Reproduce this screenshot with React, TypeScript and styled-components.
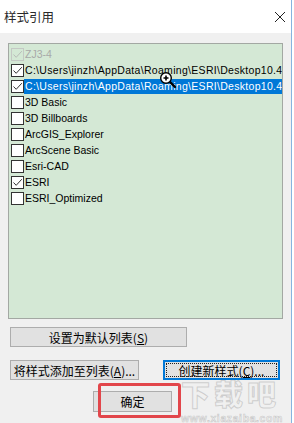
import React from "react";
import styled, { createGlobalStyle } from "styled-components";

const GlobalStyle = createGlobalStyle`
  html, body {
    margin: 0;
    padding: 0;
    background: #ffffff;
  }
  * {
    box-sizing: border-box;
  }
`;

const Window = styled.div`
  position: relative;
  width: 292px;
  height: 423px;
  display: flex;
  flex-direction: column;
  border-right: 1px solid #86b4e0;
  overflow: hidden;
  font-family: "Liberation Sans", "Noto Sans CJK SC", sans-serif;
`;

const TitleBar = styled.div`
  height: 33px;
  flex-shrink: 0;
  display: flex;
  align-items: center;
  justify-content: space-between;
  padding: 0 5px 0 4px;
  background: #ffffff;
`;

const Title = styled.span`
  font-family: "Noto Sans CJK SC", sans-serif;
  font-size: 12.5px;
  color: #2a2a2a;
`;

const Body = styled.div`
  flex: 1;
  background: #f0f0f0;
  padding: 10px 0 0 8px;
  display: flex;
  flex-direction: column;
`;

const ListBox = styled.div`
  width: 275px;
  height: 276px;
  border: 1px solid #a3a8a3;
  background: #d4e8d5;
  padding: 2px 0 0 2px;
  overflow: hidden;
`;

const Row = styled.div`
  display: flex;
  align-items: center;
  height: 16px;
  white-space: nowrap;
`;

const Box = styled.span<{ $disabled?: boolean }>`
  width: 13px;
  height: 13px;
  flex-shrink: 0;
  border: 1px solid ${(p) => (p.$disabled ? "#c4c8c4" : "#333333")};
  background: ${(p) => (p.$disabled ? "transparent" : "#ffffff")};
  display: flex;
  align-items: center;
  justify-content: center;
`;

const Label = styled.span<{ $selected?: boolean; $disabled?: boolean; $wide?: boolean }>`
  flex: ${(p) => (p.$selected ? 1 : "none")};
  height: 15px;
  line-height: 15px;
  padding: 0 2px 0 1px;
  font-size: 10.5px;
  letter-spacing: ${(p) => (p.$wide ? "0.3px" : "0")};
  color: ${(p) => (p.$selected ? "#ffffff" : p.$disabled ? "#a8a8a8" : "#000000")};
  background: ${(p) => (p.$selected ? "#0078d7" : "transparent")};
  overflow: hidden;
`;

const ButtonRow = styled.div<{ $top: number; $left: number; $gap?: number }>`
  display: flex;
  gap: ${(p) => p.$gap ?? 0}px;
  margin-top: ${(p) => p.$top}px;
  padding-left: ${(p) => p.$left}px;
`;

const Button = styled.div<{ $w: number; $h?: number; $focused?: boolean }>`
  position: relative;
  z-index: 1;
  width: ${(p) => p.$w}px;
  height: ${(p) => p.$h ?? 20}px;
  display: flex;
  align-items: center;
  justify-content: center;
  background: #e1e1e1;
  border: 1px solid ${(p) => (p.$focused ? "#0078d7" : "#adadad")};
  box-shadow: ${(p) => (p.$focused ? "inset 0 0 0 1px #0078d7" : "none")};
  font-family: "Noto Sans CJK SC", sans-serif;
  font-size: 12px;
  color: #000000;
  ${(p) =>
    p.$focused &&
    `
    &::after {
      content: "";
      position: absolute;
      inset: 2px;
      border: 1px dotted #202020;
    }
  `}
`;

const Key = styled.span`
  text-decoration: underline;
  text-underline-offset: 1px;
`;

const Highlight = styled.div`
  position: absolute;
  z-index: 2;
  left: 98px;
  top: 383px;
  width: 83px;
  height: 35px;
  border: 3px solid #e2464b;
  border-radius: 3px;
`;

const WatermarkLogo = styled.div`
  position: absolute;
  z-index: 0;
  left: 181px;
  top: 382px;
  font-family: "Liberation Sans", "Noto Sans CJK SC", sans-serif;
  font-weight: 900;
  font-size: 29px;
  line-height: 29px;
  letter-spacing: 4px;
  color: transparent;
  -webkit-text-stroke: 1px rgba(140, 140, 140, 0.35);
  pointer-events: none;
`;

const WatermarkUrl = styled.div`
  position: absolute;
  z-index: 0;
  left: 181px;
  top: 413px;
  font-family: "Liberation Sans", sans-serif;
  font-weight: bold;
  font-size: 10.5px;
  line-height: 10px;
  letter-spacing: 0.6px;
  color: transparent;
  -webkit-text-stroke: 0.6px rgba(140, 140, 140, 0.4);
  pointer-events: none;
`;

const Cursor = styled.svg`
  position: absolute;
  z-index: 3;
  left: 158px;
  top: 70px;
`;

type Item = { name: string; checked: boolean; selected?: boolean; disabled?: boolean };

const path = "C:\\Users\\jinzh\\AppData\\Roaming\\ESRI\\Desktop10.4";

const items: Item[] = [
  { name: "ZJ3-4", checked: true, disabled: true },
  { name: path, checked: true },
  { name: path, checked: true, selected: true },
  { name: "3D Basic", checked: false },
  { name: "3D Billboards", checked: false },
  { name: "ArcGIS_Explorer", checked: false },
  { name: "ArcScene Basic", checked: false },
  { name: "Esri-CAD", checked: false },
  { name: "ESRI", checked: true },
  { name: "ESRI_Optimized", checked: false },
];

function Check({ disabled }: { disabled?: boolean }) {
  return (
    <svg width="11" height="11" viewBox="0 0 11 11">
      <polyline
        points="1.5,5.5 4.2,8.3 9.8,2.2"
        fill="none"
        stroke={disabled ? "#b8bcb8" : "#333333"}
        strokeWidth="1"
      />
    </svg>
  );
}

function CloseIcon() {
  return (
    <svg width="12" height="12" viewBox="0 0 12 12">
      <path d="M1 1 L11 11 M11 1 L1 11" stroke="#222" strokeWidth="1" />
    </svg>
  );
}

export default function App() {
  return (
    <>
      <GlobalStyle />
      <Window>
        <WatermarkLogo>下载吧</WatermarkLogo>
        <WatermarkUrl>www.xiazaiba.com</WatermarkUrl>

        <TitleBar>
          <Title>样式引用</Title>
          <CloseIcon />
        </TitleBar>
        <Body>
          <ListBox>
            {items.map((it, i) => (
              <Row key={i}>
                <Box $disabled={it.disabled}>
                  {it.checked && <Check disabled={it.disabled} />}
                </Box>
                <Label
                  $selected={it.selected}
                  $disabled={it.disabled}
                  $wide={it.name === path}
                >
                  {it.name}
                </Label>
              </Row>
            ))}
          </ListBox>

          <ButtonRow $top={8} $left={2}>
            <Button $w={177}>
              设置为默认列表(<Key>S</Key>)
            </Button>
          </ButtonRow>
          <ButtonRow $top={13} $left={2} $gap={24}>
            <Button $w={129}>
              将样式添加至列表(<Key>A</Key>)...
            </Button>
            <Button $w={117} $focused>
              创建新样式(<Key>C</Key>)...
            </Button>
          </ButtonRow>
          <ButtonRow $top={11} $left={85}>
            <Button $w={79} $h={21}>
              确定
            </Button>
          </ButtonRow>
        </Body>

        <Highlight />

        <Cursor width="20" height="20" viewBox="0 0 20 20">
          <line x1="11" y1="11" x2="17" y2="17" stroke="#000" strokeWidth="2.4" strokeLinecap="round" />
          <circle cx="8" cy="8" r="5.3" fill="#fff" stroke="#000" strokeWidth="1.4" />
          <path d="M5.5 8 H10.5 M8 5.5 V10.5" stroke="#000" strokeWidth="1.6" />
        </Cursor>
      </Window>
    </>
  );
}
